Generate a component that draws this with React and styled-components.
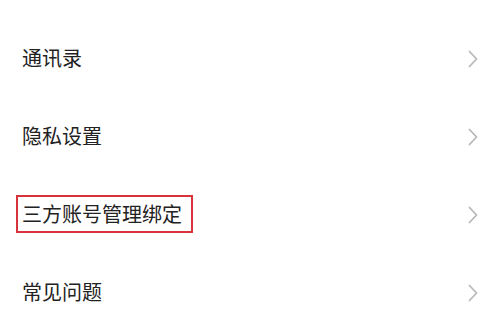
import React from "react";
import styled, { createGlobalStyle } from "styled-components";

const GlobalStyle = createGlobalStyle`
  html, body {
    margin: 0;
    padding: 0;
    background: #ffffff;
  }
  body {
    font-family: "Noto Sans CJK SC", "Noto Sans", sans-serif;
  }
`;

const items = [
  { id: 1, label: "通讯录" },
  { id: 2, label: "隐私设置" },
  { id: 3, label: "三方账号管理绑定", marked: true },
  { id: 4, label: "常见问题" },
];

const Chevron = () => (
  <svg width="10" height="18" viewBox="0 0 10 18" fill="none">
    <polyline
      points="1.5,1.5 8.5,9 1.5,16.5"
      stroke="#b8b8b8"
      strokeWidth="1.8"
      strokeLinecap="round"
      strokeLinejoin="round"
    />
  </svg>
);

const App = () => {
  return (
    <>
      <GlobalStyle />
      <List>
        {items.map((item) => (
          <Row key={item.id}>
            <Label $marked={item.marked}>{item.label}</Label>
            <Arrow>
              <Chevron />
            </Arrow>
          </Row>
        ))}
      </List>
    </>
  );
};

const List = styled.div`
  display: flex;
  flex-direction: column;
  width: 492px;
  padding-top: 19px;
  background: #ffffff;
`;

const Row = styled.div`
  display: flex;
  align-items: center;
  justify-content: space-between;
  height: 78px;
  padding: 0 14px 0 16px;
  box-sizing: border-box;
`;

const Label = styled.span`
  display: inline-block;
  font-size: 20px;
  font-weight: 400;
  line-height: 22px;
  color: #222222;
  padding: 6px 9px 6px 4px;
  border: 2px solid ${(p) => (p.$marked ? "#d8333b" : "transparent")};
`;

const Arrow = styled.span`
  display: flex;
  align-items: center;
  margin-top: 1px;
`;

export default App;
